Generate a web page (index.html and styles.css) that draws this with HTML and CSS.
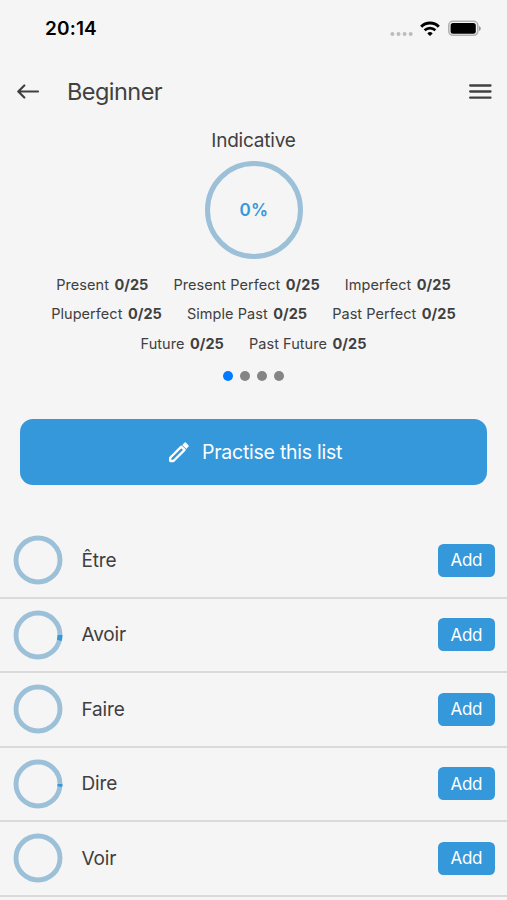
FILE: index.html
```html
<!DOCTYPE html>
<html lang="en">
<head>
<meta charset="utf-8">
<title>Beginner</title>
<link rel="stylesheet" href="styles.css">
</head>
<body>
<div class="status">
  <span class="time">20:14</span>
  <svg class="signal" width="23" height="6" viewBox="0 0 23 6" fill="#bcbcbc"><circle cx="2.4" cy="3" r="2"/><circle cx="8.5" cy="3" r="2"/><circle cx="14.6" cy="3" r="2"/><circle cx="20.7" cy="3" r="2"/></svg>
  <svg class="wifi" width="20" height="16" viewBox="0 0 20 16" fill="none" stroke="#000"><path d="M1.200 5.700a12.600 12.600 0 0 1 17.600 0" stroke-width="3"/><path d="M4.600 9.300a7.800 7.800 0 0 1 10.800 0" stroke-width="2.600"/><path d="M10 15 7.300 12.400a3.900 3.900 0 0 1 5.400 0Z" fill="#000" stroke="none"/></svg>
  <svg class="battery" width="33" height="17" viewBox="0 0 33 17"><rect x=".8" y="1.3" width="29" height="14" rx="4.2" fill="#f5f5f5" stroke="#b2b2b2" stroke-width="1.6"/><rect x="2.6" y="3" width="25.2" height="10.8" rx="2.5"/><path d="M31 6v5c1.1-.5 1.8-1.400 1.800-2.500S32.100 6.500 31 6Z" fill="#999"/></svg>
</div>
<header class="bar">
  <svg width="23" height="16" viewBox="0 0 23 16" fill="none" stroke="#404040" stroke-width="2.200" stroke-linecap="round" stroke-linejoin="round"><path d="M21 7.500H1.500M7.300 1.500 1.300 7.500l6 6"/></svg>
  <h1>Beginner</h1>
  <svg width="23" height="16" viewBox="0 0 23 16" fill="none" stroke="#404040" stroke-width="2.300" stroke-linecap="round"><path d="M1.200 1.500h20.300M1.200 7.500h20.300M1.200 13.700h20.300"/></svg>
</header>
<section class="summary">
  <h2>Indicative</h2>
  <div class="total">0%</div>
  <div class="line"><span>Present <b>0/25</b></span><span>Present Perfect <b>0/25</b></span><span>Imperfect <b>0/25</b></span></div>
  <div class="line"><span>Pluperfect <b>0/25</b></span><span>Simple Past <b>0/25</b></span><span>Past Perfect <b>0/25</b></span></div>
  <div class="line"><span>Future <b>0/25</b></span><span>Past Future <b>0/25</b></span></div>
  <div class="dots"><i class="on"></i><i></i><i></i><i></i></div>
</section>
<button class="practise">
  <svg width="22" height="22" viewBox="0 0 22 22" fill="none" stroke="#fff" stroke-width="2.300" stroke-linejoin="round"><path d="M2.200 16.700 13.300 5.600l3.300 3.300L5.500 20H2.200Z"/><path d="M14.300 3.900 16.600 1.600q.6-.6 1.200 0l2.800 2.800q.6.600 0 1.200L18.300 7.900Z" fill="#fff" stroke="none"/></svg>
  <span>Practise this list</span>
</button>
<ul class="verbs">
  <li><svg class="ring" viewBox="0 0 50 50"><circle cx="25" cy="25" r="22"/></svg><span>Être</span><button>Add</button></li>
  <li><svg class="ring" viewBox="0 0 50 50"><circle cx="25" cy="25" r="22"/><path d="M47 25A22 22 0 0 1 46.300 30.400"/></svg><span>Avoir</span><button>Add</button></li>
  <li><svg class="ring" viewBox="0 0 50 50"><circle cx="25" cy="25" r="22"/></svg><span>Faire</span><button>Add</button></li>
  <li><svg class="ring" viewBox="0 0 50 50"><circle cx="25" cy="25" r="22"/><path d="M47 25A22 22 0 0 1 46.800 27.700"/></svg><span>Dire</span><button>Add</button></li>
  <li><svg class="ring" viewBox="0 0 50 50"><circle cx="25" cy="25" r="22"/></svg><span>Voir</span><button>Add</button></li>
</ul>
</body>
</html>
```
FILE: styles.css
```css
* { box-sizing: border-box; margin: 0; padding: 0; }
html { background: #f5f5f5; }
body { width: 507px; height: 900px; overflow: hidden; background: #f5f5f5; color: #404040; font-family: Inter, sans-serif; }
svg { display: block; flex: none; }
button { border: 0; background: #3498db; color: #fff; font-family: inherit; }

.status { display: flex; align-items: center; height: 57px; padding: 0 26px 0 45px; color: #000; }
.time { margin-right: auto; font-size: 19px; font-weight: 600; letter-spacing: .15px; }
.signal { margin: 10px 7px 0 0; }
.wifi { margin-right: 8px; }

.bar { display: flex; align-items: center; height: 69px; padding: 0 15.500px 0 17px; }
.bar h1 { margin: 0 auto 0 27px; font-size: 23.500px; font-weight: 400; letter-spacing: -.55px; }

.summary { display: flex; flex-direction: column; align-items: center; }
.summary h2 { height: 28px; line-height: 29px; font-size: 19px; font-weight: 400; letter-spacing: -.2px; }
.total { display: grid; place-items: center; width: 98px; height: 98px; margin: 7px 0 10.600px; border: 5px solid #9dc0d9; border-radius: 50%; color: #3498db; font-size: 17px; font-weight: 600; line-height: 20px; letter-spacing: .3px; padding-left: 1px; }
.line { display: flex; gap: 25px; height: 29.600px; line-height: 29.600px; font-size: 14.500px; letter-spacing: .05px; white-space: nowrap; }
.line b { margin-left: 1.300px; font-weight: 700; }
.dots { display: flex; gap: 7.200px; margin-top: 12.600px; }
.dots i { width: 10px; height: 10px; border-radius: 50%; background: #858585; }
.dots .on { background: #007aff; }

.practise { display: flex; align-items: center; justify-content: center; gap: 12.500px; width: 467px; height: 66px; margin: 38.100px 0 38.900px 20.400px; padding-left: 2px; border-radius: 13px; font-size: 19.500px; letter-spacing: -.25px; }

.verbs { list-style: none; }
.verbs li { display: flex; align-items: center; height: 74.550px; padding: 0 12.500px; border-bottom: 2px solid #dadada; font-size: 19px; letter-spacing: -.15px; }
.ring { width: 50px; height: 50px; fill: none; stroke: #9dc0d9; stroke-width: 4.900; }
.ring path { stroke: #3498db; }
.verbs span { margin: 0 auto 0 19px; }
.verbs button { width: 56.500px; height: 33px; border-radius: 5.500px; font-size: 17px; letter-spacing: -.4px; }
```
